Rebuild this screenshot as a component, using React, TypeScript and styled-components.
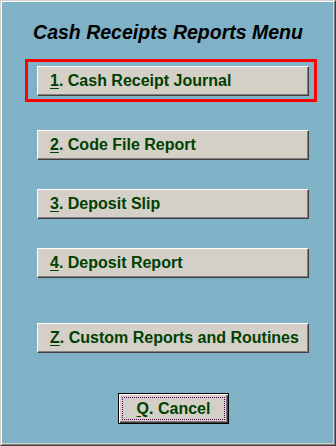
import React from "react";
import styled, { createGlobalStyle } from "styled-components";

const GlobalStyle = createGlobalStyle`
  html, body {
    margin: 0;
    padding: 0;
    background: #7fb2c7;
  }
  * {
    box-sizing: border-box;
  }
`;

const Window = styled.div`
  width: 336px;
  height: 446px;
  border-top: 1px solid #d4d0c8;
  border-left: 1px solid #d4d0c8;
  border-right: 1px solid #404040;
  border-bottom: 1px solid #404040;
  background: #7fb2c7;
`;

const Panel = styled.div`
  height: 100%;
  display: flex;
  flex-direction: column;
  align-items: flex-start;
  border-top: 1px solid #ffffff;
  border-left: 1px solid #ffffff;
  border-right: 1px solid #808080;
  border-bottom: 1px solid #808080;
  box-shadow: inset -1px -1px 0 #d4d0c8;
  font-family: "Liberation Sans", Arial, sans-serif;
`;

const Title = styled.h1`
  align-self: stretch;
  margin: 20px 0 0;
  height: 21px;
  line-height: 21px;
  font-size: 19.5px;
  font-weight: bold;
  font-style: italic;
  text-align: center;
  color: #000000;
`;

const Highlight = styled.div`
  position: relative;
`;

// red annotation box drawn over the first menu entry
const HighlightRing = styled.div`
  position: absolute;
  left: 23px;
  top: 16px;
  width: 292px;
  height: 43px;
  border: 3px solid #ff0000;
  pointer-events: none;
`;

const MenuButton = styled.button<{ $top: number }>`
  margin: ${(p) => p.$top}px 0 0 35px;
  width: 272px;
  height: 30px;
  padding: 0 0 0 12px;
  display: flex;
  align-items: center;
  background: #d4d0c8;
  border-top: 1px solid #ffffff;
  border-left: 1px solid #ffffff;
  border-right: 1px solid #404040;
  border-bottom: 1px solid #404040;
  box-shadow: inset -1px -1px 0 #808080;
  font-family: "Liberation Sans", Arial, sans-serif;
  font-size: 16px;
  font-weight: bold;
  color: #004000;
  text-align: left;
  cursor: pointer;

  &:hover,
  &:focus {
    background: #d4d0c8;
    outline: none;
  }

  & u {
    text-decoration: underline;
    text-underline-offset: 2px;
  }
`;

const CancelButton = styled.button`
  position: relative;
  margin: 40px 0 0 116px;
  width: 111px;
  height: 31px;
  padding: 0;
  background: #d4d0c8;
  border: 1px solid #000000;
  box-shadow: inset 1px 1px 0 #ffffff, inset -1px -1px 0 #404040,
    inset -2px -2px 0 #808080;
  font-family: "Liberation Sans", Arial, sans-serif;
  font-size: 16px;
  font-weight: bold;
  color: #004000;
  cursor: pointer;

  &:hover,
  &:focus {
    background: #d4d0c8;
    outline: none;
  }

  & u {
    text-underline-offset: 2px;
  }
`;

const FocusRing = styled.span`
  position: absolute;
  left: 3px;
  top: 3px;
  right: 3px;
  bottom: 3px;
  border: 1px dotted #500050;
  pointer-events: none;
`;

const items = [
  { key: "1", label: ". Cash Receipt Journal", top: 23 },
  { key: "2", label: ". Code File Report", top: 34 },
  { key: "3", label: ". Deposit Slip", top: 29 },
  { key: "4", label: ". Deposit Report", top: 29 },
  { key: "Z", label: ". Custom Reports and Routines", top: 45 },
];

export default function App() {
  return (
    <>
      <GlobalStyle />
      <Window>
        <Panel>
          <Title>Cash Receipts Reports Menu</Title>
          {items.map((item, i) => {
            const button = (
              <MenuButton key={item.key} $top={item.top}>
                <span>
                  <u>{item.key}</u>
                  {item.label}
                </span>
              </MenuButton>
            );
            return i === 0 ? (
              <Highlight key={item.key}>
                {button}
                <HighlightRing />
              </Highlight>
            ) : (
              button
            );
          })}
          <CancelButton>
            <FocusRing />
            <u>Q</u>. Cancel
          </CancelButton>
        </Panel>
      </Window>
    </>
  );
}
